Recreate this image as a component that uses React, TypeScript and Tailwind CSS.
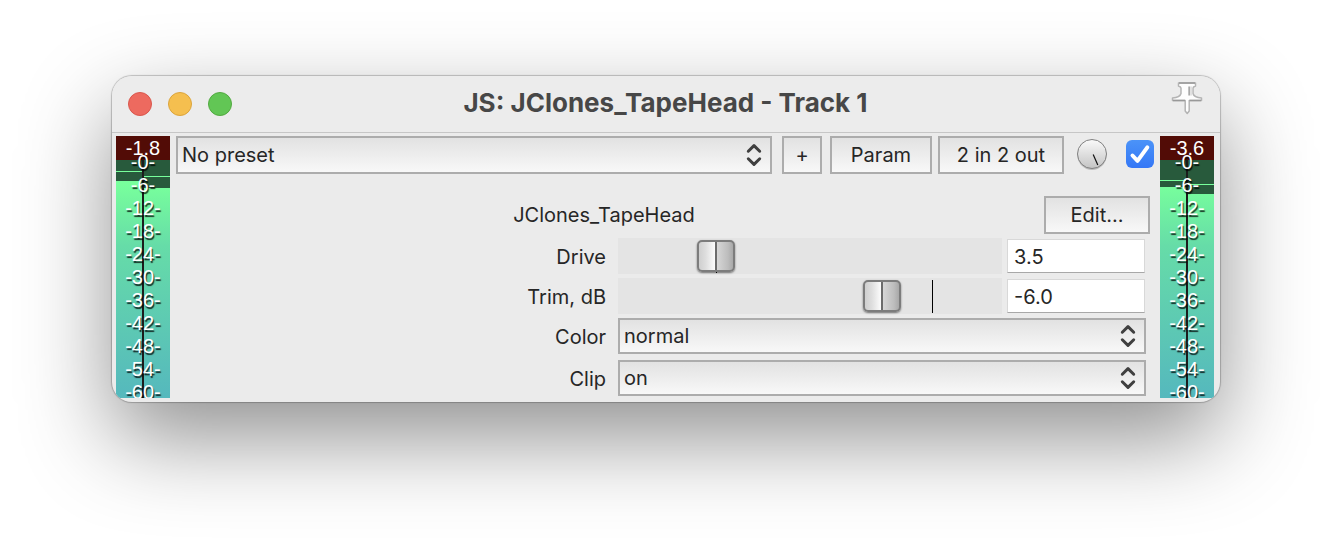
import { useState } from "react";
import type { ReactNode } from "react";

const SCALE = [0, 6, 12, 18, 24, 30, 36, 42, 48, 54, 60];

interface Channel {
  level: number;
  hold: number;
}

function MeterBar({ level, hold }: Channel) {
  return (
    <div className="flex-1">
      <div className="bg-[#285a3c]" style={{ height: level, paddingTop: hold }}>
        <div className="h-px bg-[#78ff9c]" />
      </div>
    </div>
  );
}

function Meter({ label, peak, left, right }: { label: string; peak: string; left: Channel; right: Channel }) {
  return (
    <section
      aria-label={label}
      className="relative flex w-[54px] shrink-0 flex-col overflow-hidden bg-[linear-gradient(to_bottom,#78ff9c_48px,#66dca8_110px,#55b8bd_100%)] font-['Liberation_Sans',Arial,sans-serif] text-xl text-white"
    >
      <div className="h-6 bg-[#520c06]" />
      <div className="flex">
        <MeterBar {...left} />
        <MeterBar {...right} />
      </div>
      <div className="absolute inset-x-0 top-6 bottom-0 mx-auto w-0.5 bg-[#1c1c1c]" />
      <div className="absolute inset-x-0 top-0 flex flex-col text-center [text-shadow:1px_2px_1px_rgba(0,0,0,0.8)]">
        <div className="h-[15px] leading-6 [text-shadow:none]">{peak}</div>
        {SCALE.map((db) => (
          <div key={db} className="h-[23px] leading-[23px]">{`-${db}-`}</div>
        ))}
      </div>
    </section>
  );
}

const BOX = "border-2 border-[#acacac] bg-linear-to-b from-[#e2e2e2] to-[#f8f8f8] text-xl text-[#262626]";

function PushButton({ children, className, label }: { children: ReactNode; className: string; label?: string }) {
  return (
    <button type="button" aria-label={label} className={`h-[38px] shrink-0 ${BOX} ${className}`}>
      {children}
    </button>
  );
}

function Dropdown({ id, label, options, className }: { id: string; label?: string; options: string[]; className: string }) {
  return (
    <div className="relative min-w-0 flex-1">
      <select id={id} aria-label={label} className={`block w-full appearance-none rounded-none pr-10 pl-1 ${BOX} ${className}`}>
        {options.map((o) => (
          <option key={o}>{o}</option>
        ))}
      </select>
      <svg viewBox="0 0 16 24" className="pointer-events-none absolute inset-y-0 right-2.5 my-auto h-6 w-4" fill="none" stroke="#404040" strokeWidth="3" strokeLinecap="round" strokeLinejoin="round">
        <path d="M2.3 8.2 8 2.6l5.7 5.6M2.3 15.8 8 21.4l5.7-5.6" />
      </svg>
    </div>
  );
}

function Row({ id, label, children }: { id: string; label: string; children: ReactNode }) {
  return (
    <div className="grid grid-cols-[minmax(0,430fr)_minmax(0,528fr)] items-center gap-3 pr-2">
      <label htmlFor={id} className="pt-0.5 text-right">
        {label}
      </label>
      <div className="flex items-center">{children}</div>
    </div>
  );
}

interface FaderProps {
  id: string;
  label: string;
  start: number;
  reading: string;
  tick: number;
}

function Fader({ id, label, start, reading, tick }: FaderProps) {
  const [pos, setPos] = useState(start);
  const [text, setText] = useState(reading);
  return (
    <Row id={id} label={label}>
      <div className="relative h-9 min-w-0 flex-1 bg-[#e4e4e4]">
        <div className="absolute top-0.5 bottom-px w-px bg-black" style={{ left: `${tick}%` }} />
        <input
          id={id}
          type="range"
          min={0}
          max={1000}
          value={pos}
          onChange={(e) => setPos(Number(e.target.value))}
          className="relative block h-9 w-full appearance-none bg-transparent [&::-webkit-slider-thumb]:h-8 [&::-webkit-slider-thumb]:w-[38px] [&::-webkit-slider-thumb]:appearance-none [&::-webkit-slider-thumb]:rounded-[5px] [&::-webkit-slider-thumb]:border-2 [&::-webkit-slider-thumb]:border-[#7c7c7c] [&::-webkit-slider-thumb]:bg-[linear-gradient(to_right,#cfcfcf_0%,#dedede_20%,#fbfbfb_46%,#6c6c6c_47%,#6c6c6c_53%,#d6d6d6_54%,#bdbdbd_85%,#a8a8a8_100%)] [&::-webkit-slider-thumb]:shadow-[0_1px_2px_rgba(0,0,0,0.5)]"
        />
      </div>
      <input
        type="text"
        aria-label={`${label} value`}
        value={text}
        onChange={(e) => setText(e.target.value)}
        className="mr-px ml-[5px] h-[34px] w-[138px] border border-[#d8d8d8] border-b-[#a8a8a8] bg-white px-1.5 pt-0.5 text-xl text-[#262626]"
      />
    </Row>
  );
}

function Pin() {
  return (
    <svg viewBox="0 0 32 34" className="h-[34px] w-8" aria-hidden="true">
      <path
        d="M7.500 2h17v3c-1.500.6-2.500 1-2.500 2v5.500c.8 3 4 4.300 8.500 4.500v2.500H18.200V30L16.200 32.500 14.200 30V19.500H1.500V17c4.500-.2 7.700-1.500 8.500-4.500V7c0-1-1-1.400-2.500-2z"
        fill="#fdfdfd"
        stroke="#b4b4b4"
        strokeWidth="1.500"
        strokeLinejoin="round"
      />
      <path d="M8 2h16M2 19.500h12M18.500 19.500H30" stroke="#999" strokeWidth="1.300" />
      <path d="M18.300 5.500v9" stroke="#a8a8a8" strokeWidth="2" />
      <path d="M20.500 5.500v9" stroke="#e0e0e0" strokeWidth="1.500" />
    </svg>
  );
}

export default function App() {
  const [enabled, setEnabled] = useState(true);
  return (
    <main className="min-h-screen overflow-hidden bg-white px-28 pt-19 pb-37 font-['Inter',sans-serif] text-xl text-[#262626]">
      <div className="overflow-hidden rounded-[20px] bg-[#ebebeb] shadow-[0_0_1px_1px_rgba(0,0,0,0.22),0_36px_90px_rgba(0,0,0,0.44)]">
        <header className="grid h-[57px] grid-cols-[1fr_auto_1fr] items-center border-b border-[#c6c6c6] bg-[#ececec] pr-[17px] pl-4">
          <div className="flex gap-4">
            <button type="button" aria-label="Close" className="size-6 rounded-full border border-[#d9574d] bg-[#ed6a5f]" />
            <button type="button" aria-label="Minimize" className="size-6 rounded-full border border-[#dba43c] bg-[#f5bf4f]" />
            <button type="button" aria-label="Zoom" className="size-6 rounded-full border border-[#52a940] bg-[#62c655]" />
          </div>
          <h1 className="pb-0.5 text-[26px] leading-8 font-bold text-[#474747]">JS: JClones_TapeHead - Track 1</h1>
          <button type="button" aria-label="Pin window" className="mt-[5px] self-start justify-self-end">
            <Pin />
          </button>
        </header>

        <div className="flex gap-1.5 pt-[3px] pr-1.5 pb-1 pl-1">
          <Meter label="Input level" peak="-1.8" left={{ level: 21, hold: 11 }} right={{ level: 28, hold: 16 }} />

          <div className="min-w-0 flex-1">
            <div className="flex">
              <Dropdown id="preset" label="Preset" options={["No preset"]} className="h-[38px]" />
              <PushButton className="ml-2.5 w-10" label="Preset options">+</PushButton>
              <PushButton className="ml-2 w-[102px]">Param</PushButton>
              <PushButton className="ml-1.5 w-[126px]">2 in 2 out</PushButton>
              <button type="button" aria-label="Wet mix" className="ml-3 self-start pt-0.5">
                <svg viewBox="0 0 32 34" className="h-[34px] w-8">
                  <defs>
                    <linearGradient id="knob" x1="0" y1="0" x2="0" y2="1">
                      <stop offset="0" stopColor="#fafafa" />
                      <stop offset="1" stopColor="#c4c4c4" />
                    </linearGradient>
                  </defs>
                  <circle cx="16" cy="17.500" r="14.500" fill="#bdbdbd" />
                  <circle cx="16" cy="16" r="14.500" fill="url(#knob)" stroke="#808080" strokeWidth="1" />
                  <path d="m17.200 16.500 4.600 10.500" stroke="#111" strokeWidth="1.200" />
                </svg>
              </button>
              <span className="relative mt-1 ml-[18px] size-7 shrink-0">
                <input
                  type="checkbox"
                  aria-label="Enable effect"
                  checked={enabled}
                  onChange={(e) => setEnabled(e.target.checked)}
                  className="block size-7 appearance-none rounded-md border border-[#b5b5b5] bg-white checked:border-0 checked:bg-linear-to-b checked:from-[#4b93f8] checked:to-[#3577f6]"
                />
                {enabled && (
                  <svg viewBox="0 0 28 28" className="pointer-events-none absolute inset-0 size-7" fill="none" stroke="#fff" strokeWidth="4" strokeLinecap="round" strokeLinejoin="round">
                    <path d="m6.500 15.500 5 5.300L21.300 7.300" />
                  </svg>
                )}
              </span>
            </div>

            <div className="mt-[22px] flex items-center pr-1">
              <h2 className="flex-1 pr-3 text-center">JClones_TapeHead</h2>
              <PushButton className="w-[106px]">Edit...</PushButton>
            </div>

            <div className="mt-1 flex flex-col gap-1">
              <Fader id="drive" label="Drive" start={227} reading="3.5" tick={25.4} />
              <Fader id="trim" label="Trim, dB" start={708} reading="-6.0" tick={81.8} />
            </div>
            <div className="mt-1 mb-0.5 flex flex-col gap-1.5">
              <Row id="color" label="Color">
                <Dropdown id="color" options={["normal"]} className="h-9" />
              </Row>
              <Row id="clip" label="Clip">
                <Dropdown id="clip" options={["on", "off"]} className="h-9" />
              </Row>
            </div>
          </div>

          <Meter label="Output level" peak="-3.6" left={{ level: 27, hold: 20 }} right={{ level: 34, hold: 24 }} />
        </div>
      </div>
    </main>
  );
}
